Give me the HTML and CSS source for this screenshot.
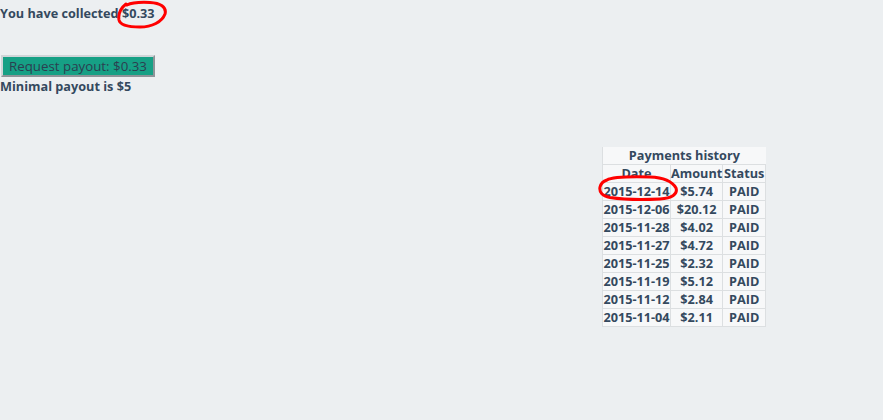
FILE: index.html
```html
<!DOCTYPE html>
<html>
<head>
<meta charset="utf-8">
<link rel="stylesheet" href="styles.css">
</head>
<body>
<div class="page">
  <div class="collected">You have collected <span class="amount">$0.33</span></div>
  <div class="payout">
    <button class="btn">Request payout: $0.33</button>
    <div class="minimal">Minimal payout is $5</div>
  </div>
  <div class="history">
    <table class="tbl">
      <thead>
        <tr><th colspan="3" class="cap">Payments history</th></tr>
        <tr><th class="c-date">Date</th><th class="c-amt">Amount</th><th class="c-st">Status</th></tr>
      </thead>
      <tbody>
        <tr><td>2015-12-14</td><td>$5.74</td><td>PAID</td></tr>
        <tr><td>2015-12-06</td><td>$20.12</td><td>PAID</td></tr>
        <tr><td>2015-11-28</td><td>$4.02</td><td>PAID</td></tr>
        <tr><td>2015-11-27</td><td>$4.72</td><td>PAID</td></tr>
        <tr><td>2015-11-25</td><td>$2.32</td><td>PAID</td></tr>
        <tr><td>2015-11-19</td><td>$5.12</td><td>PAID</td></tr>
        <tr><td>2015-11-12</td><td>$2.84</td><td>PAID</td></tr>
        <tr><td>2015-11-04</td><td>$2.11</td><td>PAID</td></tr>
      </tbody>
    </table>
  </div>
  <svg class="mark mark1" width="56" height="32" viewBox="112 0 56 32"><path d="M126 4 C121 8 118 14 119 20 C120 25 128 27 140 27 C152 27 162 22 165 14 C167 7 160 3 150 2.5 C140 2 131 3 127 5" fill="none" stroke="#ff0000" stroke-width="3" stroke-linecap="round"/></svg>
  <svg class="mark mark2" width="86" height="30" viewBox="596 172 86 30"><path d="M607 180 C612 177 630 176.5 650 177 C664 177.5 672 181 676 188 C678 194 672 198.5 660 199 C640 200 620 199 610 197.5 C602 196 599 192 600 187 C601 183 604 181 607 180" fill="none" stroke="#ff0000" stroke-width="3" stroke-linecap="round"/></svg>
</div>
</body>
</html>
```
FILE: styles.css
```css
html, body {
  margin: 0;
  padding: 0;
  background: #eceff1;
}
.page {
  position: relative;
  width: 883px;
  height: 420px;
  font-family: "Open Sans", sans-serif;
  font-size: 12.7px;
  color: #34495e;
}
.collected {
  font-weight: bold;
  line-height: 26px;
  height: 26px;
}
.payout {
  padding-top: 29px;
}
.btn {
  display: block;
  margin-left: 1px;
  width: 154px;
  height: 22px;
  padding: 0;
  font-family: "Open Sans", sans-serif;
  font-size: 13.3px;
  color: #2c3e50;
  background: #16a085;
  border-style: solid;
  border-width: 2px;
  border-top-color: #d0d5d8;
  border-left-color: #d0d5d8;
  border-right-color: #8d9498;
  border-bottom-color: #8d9498;
  text-align: center;
  line-height: 16px;
}
.minimal {
  font-weight: bold;
  line-height: 18px;
}
.history {
  margin-left: 602px;
  margin-top: 52px;
}
.tbl {
  border-collapse: collapse;
  background: #f7f8f9;
  font-weight: bold;
  font-size: 12.7px;
}
.tbl th, .tbl td {
  border: 1px solid #dcdfe1;
  height: 17px;
  padding: 0;
  line-height: 17px;
  text-align: center;
  white-space: nowrap;
}
.tbl thead tr:first-child th {
  border-top: none;
  border-right: none;
}
.c-date { width: 67px; }
.c-amt { width: 51px; }
.c-st { width: 42px; }
.mark {
  position: absolute;
}
.mark1 { left: 112px; top: 0; }
.mark2 { left: 596px; top: 172px; }
```
